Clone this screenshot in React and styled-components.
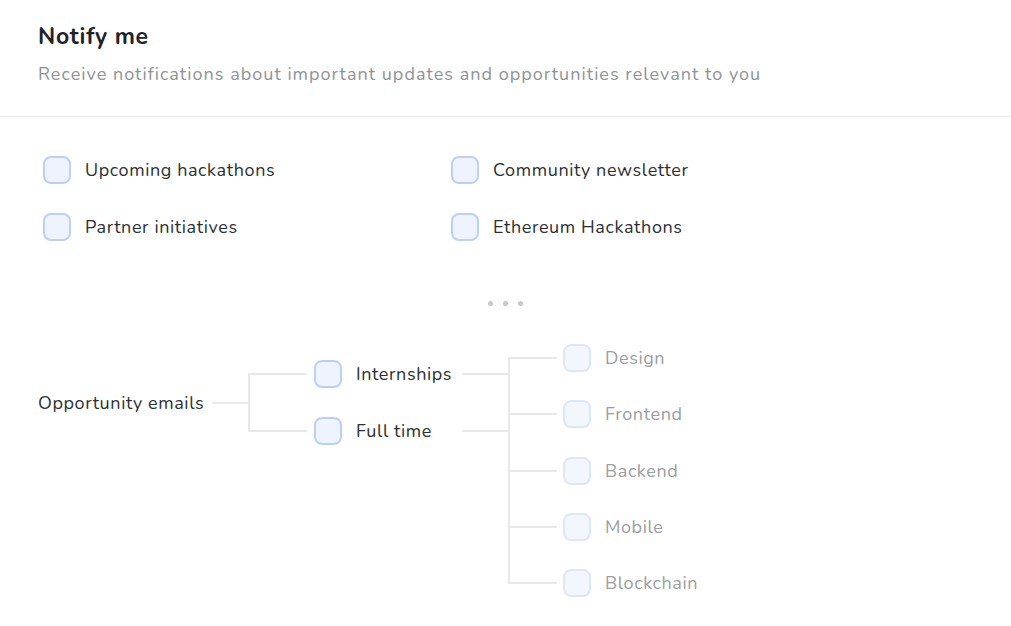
import React from "react";
import styled, { createGlobalStyle } from "styled-components";

const GlobalStyle = createGlobalStyle`
  html, body {
    margin: 0;
    padding: 0;
    background: #ffffff;
  }
  body {
    font-family: "Nunito", "Lato", "Noto Sans", sans-serif;
    color: #2b2f33;
  }
`;

const topics = [
  "Upcoming hackathons",
  "Community newsletter",
  "Partner initiatives",
  "Ethereum Hackathons"
];

const jobTypes = ["Internships", "Full time"];
const roles = ["Design", "Frontend", "Backend", "Mobile", "Blockchain"];

export default () => {
  return (
    <Page>
      <GlobalStyle />
      <Header>
        <Title>Notify me</Title>
        <Subtitle>
          Receive notifications about important updates and opportunities
          relevant to you
        </Subtitle>
      </Header>
      <Body>
        <Topics>
          {topics.map(t => (
            <Option key={t}>
              <Box />
              <Label>{t}</Label>
            </Option>
          ))}
        </Topics>
        <Dots>
          <Dot />
          <Dot />
          <Dot />
        </Dots>
        <Tree>
          <RootPart>
            <RootLabel>Opportunity emails</RootLabel>
            <Lead />
            <Group rowHeight={57}>
              {jobTypes.map(j => (
                <JobRow key={j}>
                  <Box />
                  <JobLabel>{j}</JobLabel>
                  <Tail />
                </JobRow>
              ))}
            </Group>
          </RootPart>
          <Group rowHeight={56.25}>
            {roles.map(r => (
              <RoleRow key={r}>
                <Box faded />
                <Label faded>{r}</Label>
              </RoleRow>
            ))}
          </Group>
        </Tree>
      </Body>
    </Page>
  );
};

const Page = styled.div`
  width: 1011px;
  min-height: 626px;
  background: #ffffff;
`;

const Header = styled.div`
  padding: 22px 38px 29px;
  border-bottom: 1px solid #e8e9eb;
`;

const Title = styled.div`
  font-size: 23px;
  line-height: 30px;
  font-weight: 700;
  letter-spacing: 0.7px;
  color: #1f2327;
`;

const Subtitle = styled.div`
  margin-top: 9px;
  font-size: 18px;
  line-height: 26px;
  letter-spacing: 1.03px;
  color: #8e9398;
`;

const Body = styled.div`
  padding: 39px 38px 0;
`;

const Topics = styled.div`
  display: grid;
  grid-template-columns: 408px 408px;
  row-gap: 29px;
  padding-left: 5px;
`;

const Option = styled.div`
  display: flex;
  align-items: center;
  gap: 14px;
  height: 28px;
`;

const Box = styled.span`
  flex: none;
  box-sizing: border-box;
  width: 28px;
  height: 28px;
  border-radius: 8px;
  background: ${p => (p.faded ? "#f4f6fe" : "#eef3fe")};
  border: 2px solid ${p => (p.faded ? "#dfe5fb" : "#bcd0f6")};
`;

const Label = styled.span`
  font-size: 18px;
  line-height: 26px;
  letter-spacing: 0.6px;
  color: ${p => (p.faded ? "#9b9d9f" : "#2b2f33")};
  white-space: nowrap;
`;

const Dots = styled.div`
  display: flex;
  justify-content: center;
  gap: 10px;
  margin-top: 60px;
  padding-left: 0;
`;

const Dot = styled.span`
  width: 5px;
  height: 5px;
  border-radius: 50%;
  background: #c6c7c9;
`;

const Tree = styled.div`
  display: flex;
  align-items: flex-start;
  margin-top: 24px;
`;

const RootPart = styled.div`
  display: flex;
  align-items: center;
  margin-top: 15.5px;
`;

const RootLabel = styled(Label)`
  width: 175px;
`;

const line = "#e7e8ea";

const Lead = styled.span`
  width: 35px;
  height: 2px;
  background: ${line};
`;

const Group = styled.div`
  position: relative;
  display: flex;
  flex-direction: column;
  & > * {
    height: ${p => p.rowHeight}px;
  }
  &::before {
    content: "";
    position: absolute;
    left: 0;
    top: ${p => p.rowHeight / 2 - 1}px;
    bottom: ${p => p.rowHeight / 2 - 1}px;
    width: 2px;
    background: ${line};
  }
`;

const Branch = styled.div`
  position: relative;
  display: flex;
  align-items: center;
  box-sizing: border-box;
  &::before {
    content: "";
    position: absolute;
    left: 0;
    top: 50%;
    margin-top: -1px;
    height: 2px;
    background: ${line};
  }
`;

const JobRow = styled(Branch)`
  width: 260px;
  padding-left: 66px;
  &::before {
    width: 59px;
  }
`;

const JobLabel = styled(Label)`
  margin-left: 14px;
  flex: 1;
`;

const Tail = styled.span`
  width: 46px;
  height: 2px;
  background: ${line};
`;

const RoleRow = styled(Branch)`
  padding-left: 55px;
  gap: 14px;
  &::before {
    width: 49px;
  }
`;
